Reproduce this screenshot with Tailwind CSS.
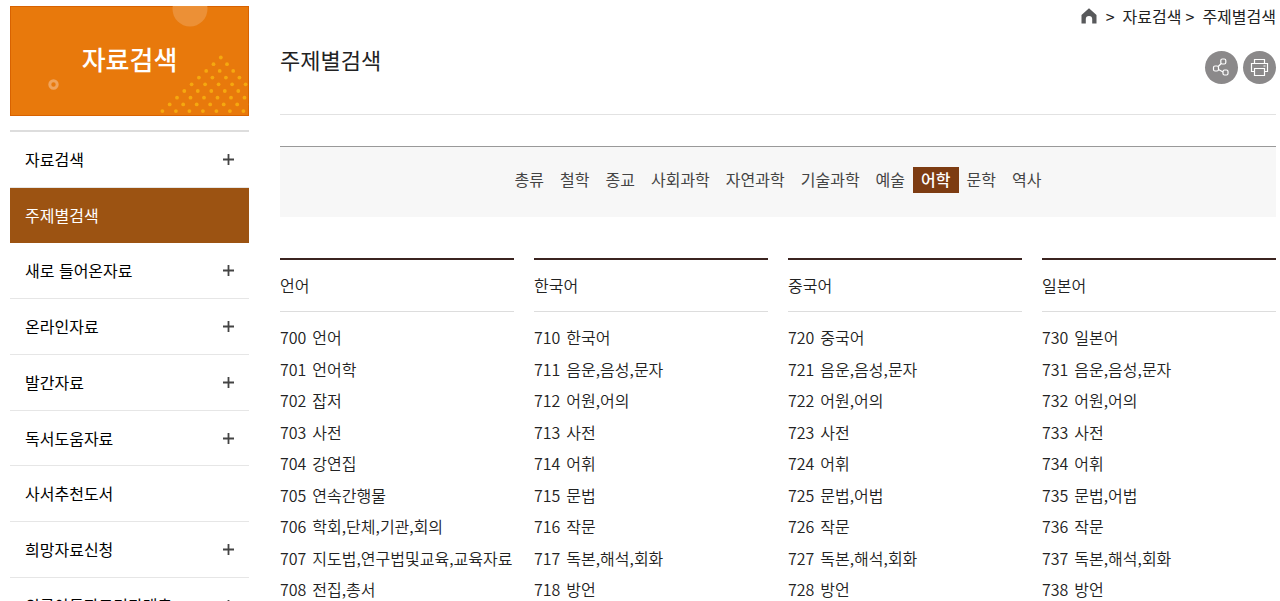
<!DOCTYPE html>
<html lang="ko">
  <head>
    <meta charset="UTF-8" />
    <meta name="viewport" content="width=device-width, initial-scale=1.0" />
    <title>주제별검색</title>
    <script src="https://cdn.jsdelivr.net/npm/@tailwindcss/browser@4"></script>
  </head>
  <body class="h-screen overflow-hidden bg-white font-['Noto_Sans_CJK_KR',sans-serif] text-base text-[#222]">
    <div class="flex items-start gap-[31px] pr-1 pl-[10px]">
      <aside class="w-[239px] shrink-0 pt-[6px]">
        <div class="relative flex h-[110px] items-center justify-center overflow-hidden bg-[#e8790c] pb-1 ring-1 ring-[#d86200] ring-inset">
          <svg class="absolute inset-0 h-full w-full" viewBox="0 0 239 110" aria-hidden="true">
            <circle cx="180" cy="3" r="17.5" fill="#ec9036" />
            <circle cx="43.5" cy="78.5" r="3.7" fill="none" stroke="#f0a45c" stroke-width="3" />
            <g id="dots" fill="#f5a80f"></g>
          </svg>
          <h2 class="relative text-[26px] leading-8 font-medium text-white">자료검색</h2>
        </div>
        <nav class="mt-[14px] border-t-2 border-[#ddd] text-black">
          <ul id="menu"></ul>
        </nav>
      </aside>

      <main class="min-w-0 flex-1">
        <nav class="flex h-8 items-center justify-end gap-2" aria-label="현재 위치">
          <a href="#" aria-label="홈" class="mr-px">
            <svg class="h-4 w-4" viewBox="0 0 16 16" fill="#58595b"><path d="M8 0.2 L15.5 7 V15.5 H11.2 V11 Q11.2 8 8 8 Q4.800 8 4.800 11 V15.5 H0.5 V7 Z" /></svg>
          </a>
          <span>&gt;</span>
          <a href="#">자료검색</a>
          <span class="-ml-1">&gt;</span>
          <a href="#">주제별검색</a>
        </nav>
        <header class="flex h-[83px] items-start justify-between border-b border-[#e2e2e2]">
          <h1 class="mt-[11px] text-[22px] leading-8">주제별검색</h1>
          <div class="mt-[19px] flex gap-[5px]">
            <button aria-label="공유" class="size-[33px] rounded-full bg-[#8b898a]">
              <svg class="size-full" viewBox="0 0 33 33" fill="none" stroke="#fff" stroke-width="1.2">
                <rect x="15.8" y="8" width="5" height="5" rx="1.5" />
                <rect x="8.500" y="15" width="5" height="5" rx="1.5" />
                <rect x="18" y="19" width="5" height="5" rx="1.5" />
                <path d="M16.300 12.500 L13.200 15.500 M13.500 18.500 L18 21" />
              </svg>
            </button>
            <button aria-label="인쇄" class="size-[33px] rounded-full bg-[#8b898a]">
              <svg class="size-full" viewBox="0 0 33 33" fill="none" stroke="#fff" stroke-width="1.2">
                <path d="M11.500 12.500 V8.500 H21.500 V12.500 M11.500 20.500 H8.500 V12.500 H24.500 V20.500 H21.500 M11.500 17.500 H21.500 V24.500 H11.500 Z M20.500 15 H22.500" />
              </svg>
            </button>
          </div>
        </header>

        <ul id="subjects" class="mt-[31px] flex h-[71px] items-center justify-center border-t border-[#999] bg-[#f7f7f7] pb-1 text-[#444]"></ul>

        <div id="columns" class="mt-[41px] grid grid-cols-4 gap-5 font-[350]"></div>
      </main>
    </div>

    <script>
      const menu = [
        ["자료검색", true],
        ["주제별검색", false],
        ["새로 들어온자료", true],
        ["온라인자료", true],
        ["발간자료", true],
        ["독서도움자료", true],
        ["사서추천도서", false],
        ["희망자료신청", true],
        ["외국아동자료기관대출", true],
      ];
      const subjects = ["총류", "철학", "종교", "사회과학", "자연과학", "기술과학", "예술", "어학", "문학", "역사"];
      const columns = [
        ["언어", 700, ["언어", "언어학", "잡저", "사전", "강연집", "연속간행물", "학회,단체,기관,회의", "지도법,연구법및교육,교육자료", "전집,총서"]],
        ["한국어", 710, ["한국어", "음운,음성,문자", "어원,어의", "사전", "어휘", "문법", "작문", "독본,해석,회화", "방언"]],
        ["중국어", 720, ["중국어", "음운,음성,문자", "어원,어의", "사전", "어휘", "문법,어법", "작문", "독본,해석,회화", "방언"]],
        ["일본어", 730, ["일본어", "음운,음성,문자", "어원,어의", "사전", "어휘", "문법,어법", "작문", "독본,해석,회화", "방언"]],
      ];

      // triangle of dots in the banner, one more dot on each row
      let dots = "";
      for (let row = 0; row < 9; row++) {
        for (let i = 0; i <= row; i++) {
          dots += `<circle cx="${210.8 - 7.3 * row + 13.5 * i}" cy="${51.5 + 6.7 * row}" r="1.9" />`;
        }
      }
      document.getElementById("dots").innerHTML = dots;

      const plus = `<svg class="size-[11px]" viewBox="0 0 11 11" stroke="#444" stroke-width="1.8"><path d="M5.5 0 V11 M0 5.5 H11" /></svg>`;

      document.getElementById("menu").innerHTML = menu
        .map(([name, more]) => {
          const color = name === "주제별검색" ? "border-[#9c5312] bg-[#9c5312] text-white" : "border-[#e6e6e6]";
          return `<li class="border-b leading-[55px] nth-[4n+2]:leading-[54px] ${color}">
            <a href="#" class="flex items-center justify-between px-[15px]">${name}${more ? plus : ""}</a>
          </li>`;
        })
        .join("");

      document.getElementById("subjects").innerHTML = subjects
        .map((name) => {
          const color = name === "어학" ? "bg-[#7d3c12] font-medium text-white" : "";
          return `<li><a href="#" class="block px-2 pb-0.5 leading-6 ${color}">${name}</a></li>`;
        })
        .join("");

      document.getElementById("columns").innerHTML = columns
        .map(([title, start, items]) => {
          const rows = items
            .map((item, i) => `<li class="leading-[31px] whitespace-nowrap odd:mb-px"><a href="#"><span class="mr-[6px]">${start + i}</span>${item}</a></li>`)
            .join("");
          return `<section>
            <h3 class="border-t-2 border-b border-t-[#3b2420] border-b-[#ddd] leading-[51px]">${title}</h3>
            <ul class="pt-[10px]">${rows}</ul>
          </section>`;
        })
        .join("");
    </script>
  </body>
</html>
